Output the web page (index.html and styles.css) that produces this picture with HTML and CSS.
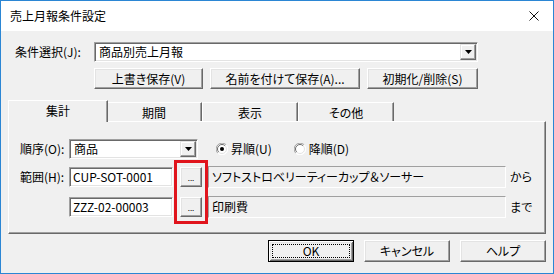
FILE: index.html
```html
<!DOCTYPE html>
<html lang="ja">
<head>
<meta charset="utf-8">
<title>売上月報条件設定</title>
<link rel="stylesheet" href="styles.css">
</head>
<body>
<div class="window">
  <div class="titlebar">
    <span class="title">売上月報条件設定</span>
    <svg class="close" width="10" height="10" viewBox="0 0 10 10"><path d="M0.5 0.5 L9.5 9.5 M9.5 0.5 L0.5 9.5" stroke="#111" stroke-width="1" fill="none"/></svg>
  </div>
  <div class="client">
    <div class="cond-row">
      <span class="label">条件選択(J):</span>
      <div class="combo cond-combo">
        <span class="value">商品別売上月報</span>
        <span class="drop"><svg width="7" height="4" viewBox="0 0 7 4"><path d="M0 0H7L3.5 4Z" fill="#000"/></svg></span>
      </div>
    </div>
    <div class="action-row">
      <button class="btn w-save">上書き保存(V)</button>
      <button class="btn w-saveas">名前を付けて保存(A)...</button>
      <button class="btn w-reset">初期化/削除(S)</button>
    </div>
    <div class="tabs">
      <div class="tabstrip">
        <div class="tab active">集計</div>
        <div class="tab">期間</div>
        <div class="tab">表示</div>
        <div class="tab">その他</div>
      </div>
      <div class="panel">
        <div class="prow order-row">
          <span class="plabel">順序(O):</span>
          <div class="combo order-combo">
            <span class="value">商品</span>
            <span class="drop"><svg width="7" height="4" viewBox="0 0 7 4"><path d="M0 0H7L3.5 4Z" fill="#000"/></svg></span>
          </div>
          <span class="radio first">
            <svg width="12" height="12" viewBox="0 0 12 12">
              <circle cx="6" cy="6" r="5.5" fill="#fff"/>
              <path d="M1.8 10.2A5.94 5.94 0 0 1 10.2 1.8" stroke="#a0a0a0" fill="none"/>
              <path d="M10.2 1.8A5.94 5.94 0 0 1 1.8 10.2" stroke="#ffffff" fill="none"/>
              <path d="M2.8 9.2A4.5 4.5 0 0 1 9.2 2.8" stroke="#696969" fill="none"/>
              <path d="M9.2 2.8A4.5 4.5 0 0 1 2.8 9.2" stroke="#e3e3e3" fill="none"/>
              <circle cx="6" cy="6" r="2" fill="#000"/>
            </svg>
            <span>昇順(U)</span>
          </span>
          <span class="radio second">
            <svg width="12" height="12" viewBox="0 0 12 12">
              <circle cx="6" cy="6" r="5.5" fill="#fff"/>
              <path d="M1.8 10.2A5.94 5.94 0 0 1 10.2 1.8" stroke="#a0a0a0" fill="none"/>
              <path d="M10.2 1.8A5.94 5.94 0 0 1 1.8 10.2" stroke="#ffffff" fill="none"/>
              <path d="M2.8 9.2A4.5 4.5 0 0 1 9.2 2.8" stroke="#696969" fill="none"/>
              <path d="M9.2 2.8A4.5 4.5 0 0 1 2.8 9.2" stroke="#e3e3e3" fill="none"/>
            </svg>
            <span>降順(D)</span>
          </span>
        </div>
        <div class="prow range-row">
          <span class="plabel">範囲(H):</span>
          <div class="field code">CUP-SOT-0001</div>
          <button class="btn mini">...</button>
          <div class="static">ソフトストロベリーティーカップ＆ソーサー</div>
          <span class="suffix">から</span>
        </div>
        <div class="prow range-row second-range">
          <span class="plabel"></span>
          <div class="field code">ZZZ-02-00003</div>
          <button class="btn mini">...</button>
          <div class="static">印刷費</div>
          <span class="suffix">まで</span>
        </div>
        <div class="highlight"></div>
      </div>
    </div>
    <div class="footer">
      <button class="btn dlg default">OK</button>
      <button class="btn dlg">キャンセル</button>
      <button class="btn dlg">ヘルプ</button>
    </div>
  </div>
</div>
</body>
</html>
```

FILE: styles.css
```css
* { box-sizing: border-box; }
html, body { margin: 0; padding: 0; }
body {
  width: 554px;
  height: 274px;
  overflow: hidden;
  font-family: "Noto Sans CJK JP", "Noto Sans", sans-serif;
  font-size: 12px;
  font-feature-settings: "palt";
  color: #000;
  background: #fff;
}
.window {
  width: 554px;
  height: 274px;
  border: 1px solid #2b86d4;
  display: flex;
  flex-direction: column;
  background: #f0f0f0;
}
.titlebar {
  height: 30px;
  background: #fff;
  display: flex;
  align-items: center;
  justify-content: space-between;
  padding: 0 14px 0 9px;
}
.title { font-size: 12px; line-height: 1; }
.close { display: block; }

.client {
  flex: 1;
  padding: 11px 7px 0 7px;
  display: flex;
  flex-direction: column;
}

/* generic controls */
.btn {
  font: inherit;
  font-feature-settings: "palt";
  color: #000;
  background: #f0f0f0;
  border: 1px solid;
  border-color: #fff #696969 #696969 #fff;
  box-shadow: inset -1px -1px #a0a0a0, inset 1px 1px #e3e3e3;
  padding: 0;
  margin: 0;
  display: flex;
  align-items: center;
  justify-content: center;
  line-height: 1;
}
.combo, .field {
  background: #fff;
  border: 1px solid;
  border-color: #a0a0a0 #fff #fff #a0a0a0;
  box-shadow: inset 1px 1px #696969, inset -1px -1px #e3e3e3;
  display: flex;
  align-items: center;
  height: 20px;
  line-height: 1;
}
.combo .value { flex: 1; padding-left: 4px; }
.combo .drop {
  width: 16px;
  height: 16px;
  margin-right: 1px;
  background: #f0f0f0;
  border: 1px solid;
  border-color: #e3e3e3 #696969 #696969 #e3e3e3;
  box-shadow: inset -1px -1px #a0a0a0, inset 1px 1px #fff;
  display: flex;
  align-items: center;
  justify-content: center;
}
.combo .drop svg { display: block; }

/* top rows */
.cond-row { display: flex; align-items: center; height: 20px; }
.label { width: 86px; padding-left: 7px; line-height: 1; }
.cond-combo { width: 384px; }

.action-row {
  display: flex;
  gap: 7px;
  margin-top: 6px;
  padding-left: 86px;
}
.action-row .btn { height: 21px; }
.w-save { width: 109px; }
.w-saveas { width: 150px; }
.w-reset { width: 111px; }

/* tabs */
.tabs { margin-top: 11px; }
.tabstrip {
  display: flex;
  align-items: flex-end;
  height: 21px;
  padding-left: 2px;
}
.tab {
  width: 96px;
  height: 19px;
  border-top: 1px solid #fff;
  border-left: 1px solid #fff;
  border-right: 1px solid #696969;
  box-shadow: inset -1px 0 #a0a0a0;
  display: flex;
  align-items: center;
  justify-content: center;
  padding-top: 1px;
  line-height: 1;
  background: #f0f0f0;
}
.tab.active {
  width: 100px;
  height: 22px;
  margin: 0 -2px -1px -2px;
  padding-top: 0;
  padding-bottom: 1px;
  position: relative;
  z-index: 1;
}
.panel {
  position: relative;
  height: 113px;
  border: 1px solid;
  border-color: #fff #696969 #696969 #fff;
  box-shadow: inset -1px -1px #a0a0a0;
  padding: 17px 0 0 11px;
}
.prow { display: flex; align-items: center; }
.plabel { width: 49px; line-height: 1; flex: none; }
.order-row { height: 20px; }
.order-combo { width: 129px; }
.radio { display: flex; align-items: center; gap: 3px; line-height: 1; }
.radio svg { display: block; }
.radio.first { margin-left: 18px; }
.radio.second { margin-left: 22px; }

.range-row { height: 22px; margin-top: 7px; }
.second-range { margin-top: 8px; }
.field.code { width: 104px; padding-left: 3px; font-feature-settings: normal; }
.btn.mini {
  width: 22px;
  height: 20px;
  margin-left: 7px;
  font-size: 8px;
  align-items: flex-end;
  padding-bottom: 4px;
  letter-spacing: 0;
}
.static {
  width: 298px;
  height: 22px;
  margin-left: 6px;
  border: 1px solid;
  border-color: #a0a0a0 #fff #fff #a0a0a0;
  display: flex;
  align-items: center;
  padding-left: 3px;
  line-height: 1;
}
.suffix { margin-left: 4px; line-height: 1; }

.highlight {
  position: absolute;
  left: 165px;
  top: 38px;
  width: 34px;
  height: 64px;
  border: 3px solid #e0141c;
}

/* footer */
.footer {
  display: flex;
  justify-content: flex-end;
  gap: 10px;
  margin-top: 6px;
}
.btn.dlg { width: 86px; height: 22px; }
.btn.default {
  position: relative;
  border: 1px solid #000;
  box-shadow: inset 1px 1px #fff, inset -1px -1px #696969, inset 2px 2px #e3e3e3, inset -2px -2px #a0a0a0;
}
.btn.default::after {
  content: "";
  position: absolute;
  left: 3px;
  top: 3px;
  right: 3px;
  bottom: 3px;
  border: 1px dotted #000;
}
```
